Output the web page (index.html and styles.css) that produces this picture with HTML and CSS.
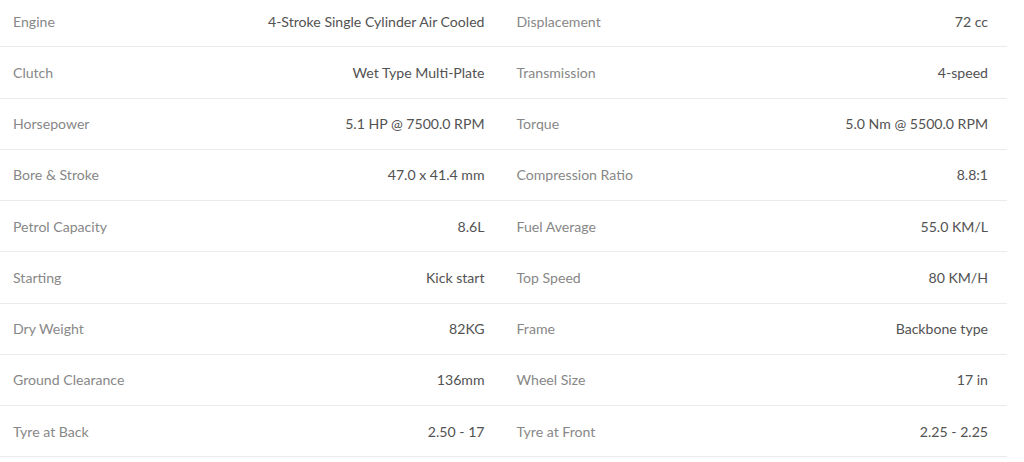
FILE: index.html
```html
<!DOCTYPE html>
<html lang="en">
<head>
<meta charset="utf-8">
<title>Specifications</title>
<link rel="stylesheet" href="styles.css">
</head>
<body>
<div class="specs">
  <div class="spec"><span class="label">Engine</span><span class="value">4-Stroke Single Cylinder Air Cooled</span></div>
  <div class="spec"><span class="label">Displacement</span><span class="value">72 cc</span></div>
  <div class="spec"><span class="label">Clutch</span><span class="value">Wet Type Multi-Plate</span></div>
  <div class="spec"><span class="label">Transmission</span><span class="value">4-speed</span></div>
  <div class="spec"><span class="label">Horsepower</span><span class="value">5.1 HP @ 7500.0 RPM</span></div>
  <div class="spec"><span class="label">Torque</span><span class="value">5.0 Nm @ 5500.0 RPM</span></div>
  <div class="spec"><span class="label">Bore &amp; Stroke</span><span class="value">47.0 x 41.4 mm</span></div>
  <div class="spec"><span class="label">Compression Ratio</span><span class="value">8.8:1</span></div>
  <div class="spec"><span class="label">Petrol Capacity</span><span class="value">8.6L</span></div>
  <div class="spec"><span class="label">Fuel Average</span><span class="value">55.0 KM/L</span></div>
  <div class="spec"><span class="label">Starting</span><span class="value">Kick start</span></div>
  <div class="spec"><span class="label">Top Speed</span><span class="value">80 KM/H</span></div>
  <div class="spec"><span class="label">Dry Weight</span><span class="value">82KG</span></div>
  <div class="spec"><span class="label">Frame</span><span class="value">Backbone type</span></div>
  <div class="spec"><span class="label">Ground Clearance</span><span class="value">136mm</span></div>
  <div class="spec"><span class="label">Wheel Size</span><span class="value">17 in</span></div>
  <div class="spec"><span class="label">Tyre at Back</span><span class="value">2.50 - 17</span></div>
  <div class="spec"><span class="label">Tyre at Front</span><span class="value">2.25 - 2.25</span></div>
</div>
</body>
</html>
```

FILE: styles.css
```css
html, body {
  margin: 0;
  padding: 0;
  background: #ffffff;
}

body {
  font-family: Lato, "Open Sans", sans-serif;
  font-size: 14.1px;
}

.specs {
  width: 1007px;
  margin-top: -4px;
  display: grid;
  grid-template-columns: 1fr 1fr;
}

.spec {
  height: 50.25px;
  border-bottom: 1px solid #ebebeb;
  display: flex;
  align-items: center;
  justify-content: space-between;
  padding: 0 19px 0 13px;
}

.label {
  color: #878787;
}

.value {
  color: #525252;
}
```
